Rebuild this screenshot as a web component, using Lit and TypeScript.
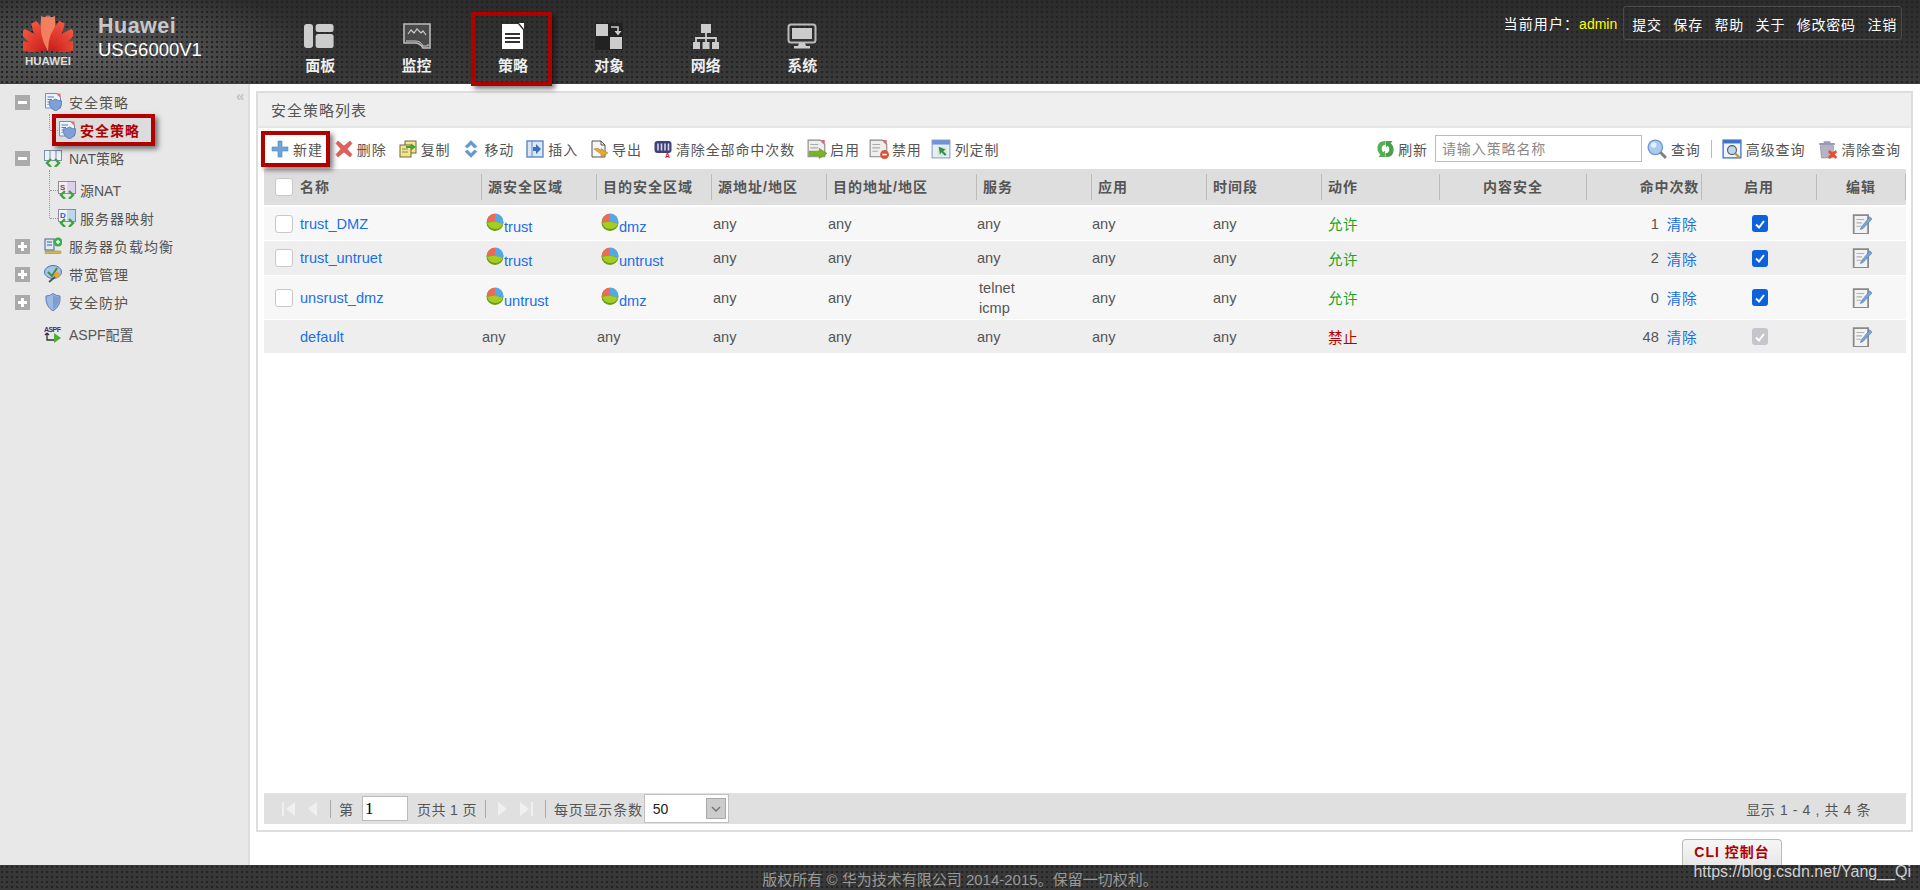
import { LitElement, html, css, svg } from 'lit';
import { customElement } from 'lit/decorators.js';

// ---- small icons, drawn roughly after the originals ----
const box = (inner: unknown, w = 18, h = 18) =>
  html`<svg class="ic" width=${w} height=${h} viewBox="0 0 18 18">${inner}</svg>`;

const shield = svg`<path d="M5 8 Q9 8 11.500 6 Q14 8 18 8 Q18.500 15 11.500 18 Q4.500 15 5 8Z" fill="#7f9fd6" stroke="#4a6ea8" stroke-width=".7"/>`;
const docBase = svg`<path d="M1.500 .5H13L16.500 4V15H1.500Z" fill="#eef2f9" stroke="#6f8fbf"/><path d="M12 .5L16.500 5V.5Z" fill="#e86a6a"/><path d="M3.500 4H10M3.500 6.500H8M3.500 9H4.500M3.500 11.500H4.500" stroke="#4f7fc2" stroke-width="1.200"/>`;
const natArrows = svg`<path d="M7 10L3 14L7 18M11 10L15 14L11 18" fill="none" stroke="#3fa33f" stroke-width="2.400"/>`;

const I = {
  policy: box(svg`${docBase}${shield}`),
  nat: box(svg`<rect x="0.500" y="1.500" width="17" height="10" fill="#eef2f8" stroke="#7b8ea8"/><path d="M6 1V11M12 1V11" stroke="#7b8ea8"/>${natArrows}`),
  snat: box(svg`<rect x="0.500" y="0.500" width="17" height="12" fill="#f4eef8" stroke="#8a8a9a"/><rect x="9" y="1" width="8" height="11" fill="#dcd0ea"/><text x="2" y="9" font-size="8" font-weight="bold" fill="#a83a2a" font-family="Liberation Sans">S</text>${natArrows}`),
  dnat: box(svg`<rect x="0.500" y="0.500" width="17" height="12" fill="#eef4fa" stroke="#8a8a9a"/><rect x="9" y="1" width="8" height="11" fill="#bcd6ee"/><text x="2" y="9" font-size="8" font-weight="bold" fill="#2a5ac8" font-family="Liberation Sans">D</text>${natArrows}`),
  lb: box(svg`<rect x="1" y="2" width="9" height="11" fill="#dfe8f4" stroke="#44628c"/><path d="M3 5H8M3 8H8" stroke="#44628c"/><circle cx="14" cy="5" r="4.500" fill="#3fae4a"/><path d="M12 5H16M14 3V7" stroke="#fff" stroke-width="1.400"/><rect x="1" y="14" width="16" height="2.500" rx="1" fill="#d8b84a" stroke="#8c7a2a" stroke-width=".5"/>`),
  qos: box(svg`<ellipse cx="9" cy="7" rx="8.500" ry="6.500" fill="#a6c4ea" stroke="#4a74ac"/><path d="M4 7L8 11L13 3" stroke="#3f8f3f" stroke-width="2" fill="none"/><circle cx="13" cy="10" r="3" fill="#e8a23a"/><path d="M11 12L5 17" stroke="#555" stroke-width="2"/>`),
  guard: box(svg`<path d="M2 3Q6 3 9 .5Q12 3 16 3Q17 13 9 18Q1 13 2 3Z" fill="#9db8e2" stroke="#5a7fb8"/><path d="M9 2Q12 4 15 4Q15.500 12 9 16.500Z" fill="#7d9ed2"/>`),
  aspf: box(svg`<text x="0" y="6.500" font-size="7" font-weight="bold" fill="#4a2a7a" font-family="Liberation Sans" textLength="18">ASPF</text><path d="M3 8V15H10M3 8L1 10M3 8L5 10" stroke="#333" stroke-width="1.300" fill="none"/><path d="M10 8L17 13L10 18Z" fill="#4fae2f"/>`),
  plus: box(svg`<path d="M7 1H11V7H17V11H11V17H7V11H1V7H7Z" fill="#6da5dc" stroke="#4f86bd" stroke-width=".6"/>`),
  del: box(svg`<path d="M3 1L9 6L15 1L17 3.500L12 9L17 14.500L15 17L9 12L3 17L1 14.500L6 9L1 3.500Z" fill="#e2605a" stroke="#b8403c" stroke-width=".5"/>`),
  copy: box(svg`<rect x="6" y="1" width="11" height="12" fill="#f4e58c" stroke="#6b6b3a"/><rect x="1" y="5" width="11" height="12" fill="#f4e58c" stroke="#6b6b3a"/><path d="M3 9H9M3 12H9" stroke="#8a8a4a"/><path d="M7 6H12V3.500L17 7L12 10.500V8H7Z" fill="#3fa33f"/>`),
  move: box(svg`<path d="M9 .5L15 6.500L12.500 8L9 4.500L5.500 8L3 6.500Z M9 17.500L15 11.500L12.500 10L9 13.500L5.500 10L3 11.500Z" fill="#5f9ad8" stroke="#4a7eb4" stroke-width=".4"/>`),
  insert: box(svg`<rect x="1" y="1" width="16" height="16" fill="#dbe6f6" stroke="#5f86c4" stroke-width="1.400"/><path d="M6 1V17" stroke="#5f86c4"/><path d="M7 7H10V4L15 9L10 14V11H7Z" fill="#3b6fb8"/>`),
  exportIc: box(svg`<path d="M2 1H11L15 5V17H2Z" fill="#f4f6fa" stroke="#555"/><path d="M11 1V5H15" fill="none" stroke="#555"/><path d="M4 9Q9 7 11 11V8.500L18 13L11 17V14Q8 12 4 9Z" fill="#e5a92c" stroke="#a8761a" stroke-width=".5"/>`),
  clearHits: box(svg`<rect x="0.500" y="1" width="17" height="12" rx="3" fill="#41417a"/><path d="M4 3.500V10.500M7.500 3.500V10.500M11 3.500V10.500M14.500 3.500V10.500" stroke="#d8d8ea" stroke-width="1.600"/><text x="11" y="18" font-size="7" font-weight="bold" fill="#d42020" font-family="Liberation Sans">A</text>`),
  enable: box(svg`<path d="M1 1H12L16 5V16H1Z" fill="#eee" stroke="#888"/><path d="M12 1L16 5V1Z" fill="#e86a6a"/><path d="M3 5H10M3 8H10" stroke="#aaa"/><path d="M2 11H11V8.500L18 13L11 17.500V15H2Z" fill="#7ab41e" stroke="#55841a" stroke-width=".5"/>`, 20, 20),
  disable: box(svg`<path d="M1 1H12L16 5V16H1Z" fill="#eee" stroke="#888"/><path d="M12 1L16 5V1Z" fill="#e86a6a"/><path d="M3 5H10M3 8H10M3 11H8" stroke="#aaa"/><circle cx="14" cy="14" r="4" fill="#e0522e"/><path d="M12 14H16" stroke="#fff" stroke-width="1.400"/>`, 20, 20),
  columns: box(svg`<rect x="1" y="1" width="16" height="16" fill="#e8eef6" stroke="#8aa0c0"/><rect x="1" y="1" width="16" height="4" fill="#6d94d8"/><path d="M6 7H14V15H6Z" fill="#d4e6d4"/><path d="M7 7L13 9.500L11 11L14 14L12.500 15L9.500 12L8 14Z" fill="#2f8f4f"/>`, 20, 20),
  refresh: box(svg`<path d="M9 .5Q1.500 0 .5 7Q0 12 3.500 15L1.500 17.500H8.500V10.500L6.500 12.500Q4.500 10 5 7.500Q5.500 5 9 4.500Z" fill="#55b055"/><path d="M9 17.500Q16.500 18 17.500 11Q18 6 14.500 3L16.500 .5H9.500V7.500L11.500 5.500Q13.500 8 13 10.500Q12.500 13 9 13.500Z" fill="#48a048"/>`, 17, 18),
  search: box(svg`<circle cx="7.500" cy="7.500" r="6.500" fill="#a8ccf0" stroke="#6f9ac8" stroke-width="1.200"/><circle cx="6" cy="5.500" r="2.500" fill="#e4f0fb"/><path d="M12 12L17 17" stroke="#808080" stroke-width="2.600"/>`, 20, 20),
  advSearch: box(svg`<rect x="1" y="1" width="16" height="16" fill="#eef4fb" stroke="#3f74c4" stroke-width="1.200"/><rect x="1" y="1" width="16" height="3" fill="#3f74c4"/><circle cx="9" cy="10" r="4" fill="#bcd6ee" stroke="#555"/><path d="M12 13L16 17" stroke="#c8962a" stroke-width="2"/>`, 20, 20),
  clearSearch: box(svg`<path d="M6 2H12V3.500H16V5.500H2V3.500H6Z" fill="#9a9ab0"/><path d="M3 6H15L14 17H4Z" fill="#b4b4c8" stroke="#8a8aa0" stroke-width=".6"/><path d="M11 10L14 12L17 10L18 12L16 14L18 16L17 18L14 16L11 18L10 16L12 14L10 12Z" fill="#e4502a"/>`, 20, 20),
  pie: box(svg`<circle cx="9" cy="9.500" r="8.500" fill="#6a9a1a"/><path d="M9 8.500V.5A8.200 8.200 0 0 1 17 10.500Z" fill="#55a8e8"/><path d="M9 8.500V.5A8.200 8.200 0 0 0 1 9.500Z" fill="#ec6a5a"/><path d="M9 8.500L17 10.800Q15 16 9 16Q3 16 1 9.800Z" fill="#a4cc22"/>`),
  edit: box(svg`<path d="M1.500 1H14.500V18H1.500Z" fill="#f2f2f2" stroke="#8a8a8a" stroke-width="1.600"/><path d="M4 5H11M4 8H9M4 11H8" stroke="#b0b0b0"/><path d="M16 2.500L18 4.500L10 13L7.500 14L8.500 11.500Z" fill="#74a6dc" stroke="#4a78b0" stroke-width=".5"/>`, 20, 20),
  check: html`<svg width="12" height="12" viewBox="0 0 12 12"><path d="M2 6.500L5 9.500L10 3" stroke="#fff" stroke-width="2" fill="none"/></svg>`,
};

// ---- top navigation icons ----
const navIcons = {
  panel: svg`<rect x="1" y="1" width="9" height="24" rx="3" fill="#ccc"/><rect x="13" y="1" width="20" height="8" rx="2.500" fill="#ccc" transform="scale(.9 1) translate(1 0)"/><rect x="13" y="11" width="20" height="14" rx="2.500" fill="#ccc" transform="scale(.9 1) translate(1 0)"/>`,
  monitor: svg`<g transform="translate(3 0)"><path d="M1 1H27V25H20Q17 20 12 20H1Z" fill="#4a4a4a" stroke="#bbb" stroke-width="1.600"/><path d="M5 11L8 7L11 10L14 6L18 10L20 8L23 12" fill="none" stroke="#ccc" stroke-width="1.200"/><path d="M3 18H12Q18 18 20 23H25V21" fill="none" stroke="#ccc" stroke-width="1"/></g>`,
  policy: svg`<g transform="translate(3 0)"><path d="M3 1H19L24 7V26H3Z" fill="#fff"/><path d="M20 0L25 6V0Z" fill="#fff"/><path d="M6 11H21M6 15H21M6 19H21" stroke="#333" stroke-width="2.200"/></g>`,
  object: svg`<g transform="translate(3 0)"><rect x="0" y="0" width="28" height="27" fill="#222"/><rect x="1" y="1" width="12" height="12" fill="#ccc"/><rect x="15" y="14" width="12" height="12" fill="#ccc"/><path d="M16 4H23V9" fill="none" stroke="#ccc" stroke-width="1.600"/><path d="M19.500 8H26.500L23 12.500Z" fill="#ccc"/></g>`,
  network: svg`<g transform="translate(3 0)"><rect x="9" y="1" width="10" height="9" fill="#ccc"/><path d="M14 10V15M4 21V15H24V21M14 15V21" stroke="#ccc" stroke-width="1.800" fill="none"/><rect x="1" y="19" width="7" height="7" fill="#ccc"/><rect x="10.500" y="19" width="7" height="7" fill="#ccc"/><rect x="20" y="19" width="7" height="7" fill="#ccc"/></g>`,
  system: svg`<g transform="translate(2 0)"><rect x="1.500" y="1.500" width="27" height="18" rx="2.500" fill="none" stroke="#bbb" stroke-width="2"/><rect x="5" y="5" width="20" height="11" fill="#ccc"/><path d="M12 20H18L19 23H11Z" fill="#ccc"/><rect x="7" y="23" width="16" height="2.500" fill="#ccc"/></g>`,
};

const petals = [-78, -52, -26, -6, 6, 26, 52, 78];

const navItems = [
  { label: '面板', icon: navIcons.panel },
  { label: '监控', icon: navIcons.monitor },
  { label: '策略', icon: navIcons.policy, marked: true },
  { label: '对象', icon: navIcons.object },
  { label: '网络', icon: navIcons.network },
  { label: '系统', icon: navIcons.system },
];

const toolsLeft = [
  { label: '新建', icon: I.plus, marked: true },
  { label: '删除', icon: I.del },
  { label: '复制', icon: I.copy },
  { label: '移动', icon: I.move },
  { label: '插入', icon: I.insert },
  { label: '导出', icon: I.exportIc },
  { label: '清除全部命中次数', icon: I.clearHits },
  { label: '启用', icon: I.enable, tight: true },
  { label: '禁用', icon: I.disable, tight: true },
  { label: '列定制', icon: I.columns },
];

const columns = [
  { label: '名称', cls: 'name' },
  { label: '源安全区域' },
  { label: '目的安全区域' },
  { label: '源地址/地区' },
  { label: '目的地址/地区' },
  { label: '服务' },
  { label: '应用' },
  { label: '时间段' },
  { label: '动作' },
  { label: '内容安全', cls: 'center' },
  { label: '命中次数', cls: 'right' },
  { label: '启用', cls: 'center' },
  { label: '编辑', cls: 'center' },
];

const rows = [
  { name: 'trust_DMZ', src: 'trust', dst: 'dmz', svc: ['any'], action: '允许', hits: 1, h: 33 },
  { name: 'trust_untruet', src: 'trust', dst: 'untrust', svc: ['any'], action: '允许', hits: 2, h: 34 },
  { name: 'unsrust_dmz', src: 'untrust', dst: 'dmz', svc: ['telnet', 'icmp'], action: '允许', hits: 0, h: 43 },
  { name: 'default', src: 'any', dst: 'any', svc: ['any'], action: '禁止', hits: 48, h: 33, builtin: true },
];

@customElement('app-root')
export class AppRoot extends LitElement {
  static styles = css`
    :host {
      display: flex;
      flex-direction: column;
      width: 1920px;
      height: 890px;
      overflow: hidden;
      background: #fff;
      color: #555;
      font: 14px "Liberation Sans", "Noto Sans CJK SC", sans-serif;
    }
    .ic { flex: none; display: block; }

    /* header */
    .top {
      position: relative;
      z-index: 2;
      flex: none;
      height: 84px;
      display: flex;
      border-bottom: 1px solid #4a3a3a;
      box-sizing: border-box;
      background:
        radial-gradient(circle at 2px 2px, #232323 1.1px, transparent 1.6px) 0 0 / 5px 5px,
        radial-gradient(ellipse 230px 70px at 90px 52px, #5c5c5c, transparent),
        linear-gradient(#2c2c2c, #3a3a3a);
    }
    .brand {
      width: 272px;
      flex: none;
      display: flex;
    }
    .logo {
      width: 50px;
      margin: 13px 0 0 23px;
      text-align: center;
      color: #ddd;
      font-size: 11.500px;
      font-weight: bold;
      line-height: 12px;
    }
    .logo svg { display: block; }
    .product { margin: 13px 0 0 25px; color: #fff; font-size: 18.500px; line-height: 22px; }
    .product b { display: block; color: #c8c8c8; font-size: 21.500px; letter-spacing: .5px; line-height: 26px; }
    .nav { display: flex; }
    .nav-item {
      position: relative;
      width: 96.400px;
      display: flex;
      flex-direction: column;
      align-items: center;
      padding-top: 23px;
      box-sizing: border-box;
      color: #eee;
      font-size: 15px;
      font-weight: bold;
    }
    .nav-item svg { display: block; height: 27px; margin-bottom: 4px; }
    .mark-nav {
      position: absolute;
      left: 6px;
      top: 12px;
      width: 81px;
      height: 74px;
      box-sizing: border-box;
      border: 4px solid #b00000;
      box-shadow: 3px 3px 5px rgba(0, 0, 0, .5);
    }
    .user {
      margin-left: auto;
      margin-right: 18px;
      display: flex;
      align-items: flex-start;
      padding-top: 6px;
      color: #fff;
    }
    .who { line-height: 36px; margin-right: 6px; letter-spacing: 1.100px; }
    .who i { font-style: normal; color: #ff0; letter-spacing: 0; }
    .links {
      display: flex;
      gap: 11.500px;
      height: 32px;
      line-height: 36px;
      padding: 0 4px 0 8px;
      border: 1px solid #4b4b4b;
      border-radius: 3px;
      letter-spacing: .8px;
    }

    /* body */
    .body { flex: 1; display: flex; min-height: 0; }
    .side {
      position: relative;
      flex: none;
      width: 250px;
      box-sizing: border-box;
      padding-top: 4px;
      background: #e8e8e8;
      border-right: 2px solid #dedede;
      letter-spacing: 1px;
      color: #555;
    }
    .collapse { position: absolute; left: 236px; top: 3px; color: #c4c4c4; font-size: 15px; font-weight: bold; }
    .node { height: 28px; display: flex; align-items: center; padding-left: 15px; }
    .node.last { margin-top: 4px; }
    .exp {
      flex: none;
      width: 15px;
      height: 15px;
      margin-right: 14px;
      background: #aaa;
      position: relative;
    }
    .exp.none { background: none; }
    .exp:not(.none)::before {
      content: "";
      position: absolute;
      left: 3px;
      right: 3px;
      top: 6px;
      height: 3px;
      background: #fff;
    }
    .exp.plus::after {
      content: "";
      position: absolute;
      top: 3px;
      bottom: 3px;
      left: 6px;
      width: 3px;
      background: #fff;
    }
    .node .ic { margin-right: 7px; }
    .nat { letter-spacing: 0; }
    .kids { position: relative; }
    .kids.nat-kids { padding-top: 4px; }
    .kids::before {
      content: "";
      position: absolute;
      left: 49px;
      top: -2px;
      bottom: 14px;
      border-left: 1px dotted #999;
    }
    .kid { position: relative; height: 28px; display: flex; align-items: center; padding-left: 58px; gap: 4px; }
    .kid::before {
      content: "";
      position: absolute;
      left: 50px;
      width: 8px;
      top: 14px;
      border-top: 1px dotted #999;
    }
    .kid.active { color: #b00000; font-weight: bold; background: linear-gradient(#dcdcdc, #dcdcdc) 53px 0 / 100px 100% no-repeat; }
    .kid.active::after {
      content: "";
      position: absolute;
      left: 52px;
      top: -2px;
      width: 103px;
      height: 32px;
      box-sizing: border-box;
      border: 4px solid #b00000;
      box-shadow: 3px 3px 5px rgba(0, 0, 0, .5);
    }

    .main { flex: 1; display: flex; flex-direction: column; min-width: 0; padding: 7px 7px 0 6px; }
    .panel {
      flex: none;
      height: 741px;
      box-sizing: border-box;
      border: 2px solid #ddd;
      display: flex;
      flex-direction: column;
    }
    .title {
      flex: none;
      height: 35px;
      line-height: 35px;
      padding-left: 13px;
      background: #efefef;
      border-bottom: 2px solid #e6e6e6;
      box-sizing: border-box;
      font-size: 15px;
      letter-spacing: 1px;
      color: #555;
    }
    .tools {
      flex: none;
      height: 41px;
      display: flex;
      align-items: center;
      padding: 0 10px 0 13px;
      letter-spacing: .9px;
    }
    .tool { position: relative; display: flex; align-items: center; gap: 4px; margin-right: 12px; white-space: nowrap; }
    .tool.tight { margin-right: 9px; gap: 3px; }
    .tool.marked::after {
      content: "";
      position: absolute;
      left: -10px;
      top: -8px;
      right: -7px;
      bottom: -8px;
      border: 4px solid #b00000;
      box-shadow: 3px 3px 5px rgba(0, 0, 0, .5);
    }
    .spacer { flex: 1; }
    .tools input {
      width: 207px;
      height: 27px;
      box-sizing: border-box;
      border: 1px solid #bbb;
      padding: 0 6px;
      margin: 0 5px 0 -5px;
      font: inherit;
      letter-spacing: .9px;
      outline: none;
    }
    .tools input::placeholder { color: #8a8a8a; }
    .vsep { width: 1px; height: 18px; background: #bbb; margin: 0 10px 0 -2px; }
    .tools .tool:last-child { margin-right: 0; }

    .grid { flex: none; margin: 0 5px 0 6px; }
    .row {
      display: grid;
      grid-template-columns: 218px 115px 115px 115px 150px 115px 115px 115px 118px 147px 115px 115px 89px;
      align-items: center;
      margin-bottom: 1px;
      font-size: 14.600px;
    }
    .row.head { height: 36px; background: #dedede; margin-bottom: 2px; font-weight: bold; font-size: 14px; letter-spacing: 1px; color: #555; }
    .row.odd { background: #f7f7f7; }
    .row.even { background: #eee; }
    .hcell {
      height: 26px;
      line-height: 26px;
      padding-left: 6px;
      border-right: 1px solid #bbb;
      box-sizing: border-box;
      white-space: nowrap;
    }
    .hcell.center { text-align: center; padding-left: 0; }
    .hcell.right { text-align: right; padding: 0 2px 0 0; letter-spacing: .8px; }
    .hcell.name { display: flex; align-items: center; gap: 7px; padding-left: 11px; }
    .cell { display: flex; align-items: center; white-space: nowrap; }
    .cell.name { padding-left: 11px; gap: 7px; }
    .cell.pad { padding-left: 6px; }
    .cell.addr { padding-left: 1px; }
    .cell.svc { display: block; padding-left: 0; line-height: 20px; }
    .cell.svc.multi { padding-left: 2px; }
    .cell.center { justify-content: center; }
    .cell.hits { justify-content: flex-end; gap: 8px; padding-right: 5px; }
    a { color: #1a6fe8; text-decoration: none; }
    .zone { display: flex; align-items: flex-start; padding-left: 4px; }
    .zone a { padding-top: 6px; line-height: 16px; }
    .tick {
      flex: none;
      width: 18px;
      height: 18px;
      box-sizing: border-box;
      background: #fff;
      border: 1px solid #c8c8c8;
      border-radius: 3px;
    }
    .tick.blank { background: none; border: none; }
    .on {
      width: 16px;
      height: 17px;
      border-radius: 3px;
      background: #0b62dc;
      display: flex;
      align-items: center;
      justify-content: center;
    }
    .on.off { background: #c6c6ca; }
    .allow { color: #1fa31f; letter-spacing: .5px; }
    .deny { color: #b00000; letter-spacing: .5px; }
    .link-cjk { letter-spacing: .5px; }

    .pager {
      flex: none;
      margin: auto 5px 6px 6px;
      height: 31px;
      background: #e0e0e0;
      display: flex;
      align-items: center;
      color: #555;
      white-space: nowrap;
    }
    .pbtn { display: block; margin-right: 11px; }
    .psep { width: 1px; height: 18px; background: #aaa; margin-right: 8px; }
    .pno {
      width: 46px;
      height: 25px;
      box-sizing: border-box;
      border: 1px solid #bbb;
      background: #fff;
      margin: 0 9px;
      color: #000;
      font: 17px/23px "Liberation Serif", serif;
      padding-left: 2px;
    }
    .pages { letter-spacing: .4px; }
    .per { letter-spacing: .8px; }
    .size {
      width: 85px;
      height: 29px;
      box-sizing: border-box;
      border: 1px solid #c0c0c0;
      background: #fff;
      margin-left: 1px;
      padding-left: 8px;
      display: flex;
      align-items: center;
      justify-content: space-between;
      color: #222;
    }
    .size span {
      width: 20px;
      height: 21px;
      margin-right: 2px;
      background: #ccc;
      border: 1px solid #aaa;
      box-sizing: border-box;
      display: flex;
      align-items: center;
      justify-content: center;
    }
    .range { margin-left: auto; margin-right: 35px; letter-spacing: .6px; }

    .tab-row { flex: 1; display: flex; justify-content: flex-end; align-items: flex-end; padding-right: 131px; }
    .cli {
      width: 100px;
      height: 26px;
      box-sizing: border-box;
      border: 1px solid #bbb;
      border-bottom: none;
      border-radius: 4px 4px 0 0;
      background: linear-gradient(#f6f6f6, #e8e8e8);
      color: #b00000;
      font-weight: bold;
      text-align: center;
      line-height: 24px;
      letter-spacing: 1px;
    }

    .foot {
      position: relative;
      flex: none;
      height: 25px;
      box-sizing: border-box;
      padding-top: 6px;
      text-align: center;
      color: #999;
      font-size: 15px;
      line-height: 18px;
      background:
        radial-gradient(circle at 2px 2px, #232323 1.1px, transparent 1.6px) 0 0 / 5px 5px,
        #383838;
    }
    .water {
      position: absolute;
      right: 9px;
      top: -3px;
      color: #d0d0d0;
      font-size: 16px;
      line-height: 20px;
    }
  `;

  renderZone(zone: string, builtin?: boolean) {
    if (builtin) return html`<div class="cell">${zone}</div>`;
    return html`<div class="cell zone">${I.pie}<a href="#">${zone}</a></div>`;
  }

  renderRow(r: (typeof rows)[number], i: number) {
    return html`
      <div class="row ${i % 2 ? 'even' : 'odd'}" style="height:${r.h}px">
        <div class="cell name">
          <span class="tick ${r.builtin ? 'blank' : ''}"></span>
          <a href="#">${r.name}</a>
        </div>
        ${this.renderZone(r.src, r.builtin)}
        ${this.renderZone(r.dst, r.builtin)}
        <div class="cell addr">any</div>
        <div class="cell addr">any</div>
        <div class="cell svc ${r.svc.length > 1 ? 'multi' : ''}">${r.svc.map(s => html`<div>${s}</div>`)}</div>
        <div class="cell">any</div>
        <div class="cell pad">any</div>
        <div class="cell pad"><span class=${r.builtin ? 'deny' : 'allow'}>${r.action}</span></div>
        <div class="cell"></div>
        <div class="cell hits">${r.hits}<a class="link-cjk" href="#">清除</a></div>
        <div class="cell center"><span class="on ${r.builtin ? 'off' : ''}">${I.check}</span></div>
        <div class="cell center">${I.edit}</div>
      </div>
    `;
  }

  render() {
    return html`
      <div class="top">
        <div class="brand">
          <div class="logo">
            <svg width="50" height="42" viewBox="0 0 50 42">
              <defs>
                <linearGradient id="petal" x1="0" y1="0" x2="0" y2="1">
                  <stop offset="0" stop-color="#f2553f" />
                  <stop offset="1" stop-color="#c81a18" />
                </linearGradient>
              </defs>
              ${petals.map(
                a => svg`<path d="M25 38 Q17 22 22 ${Math.abs(a) < 10 ? 2 : 6} Q25 6 28 ${Math.abs(a) < 10 ? 2 : 6} Q33 22 25 38Z" fill=${Math.abs(a) < 10 ? '#f08060' : 'url(#petal)'} transform="rotate(${a} 25 38) ${Math.abs(a) > 60 ? 'scale(1 .92)' : ''}" />`,
              )}
            </svg>
            HUAWEI
          </div>
          <div class="product"><b>Huawei</b>USG6000V1</div>
        </div>
        <div class="nav">
          ${navItems.map(
            n => html`<div class="nav-item">
              <svg width="34" height="27" viewBox="0 0 34 27">${n.icon}</svg>
              ${n.label}
              ${n.marked ? html`<div class="mark-nav"></div>` : ''}
            </div>`,
          )}
        </div>
        <div class="user">
          <div class="who">当前用户：<i>admin</i></div>
          <div class="links">
            <span>提交</span><span>保存</span><span>帮助</span><span>关于</span><span>修改密码</span><span>注销</span>
          </div>
        </div>
      </div>

      <div class="body">
        <div class="side">
          <div class="collapse">«</div>
          <div class="node"><span class="exp"></span>${I.policy}安全策略</div>
          <div class="kids">
            <div class="kid active">${I.policy}安全策略</div>
          </div>
          <div class="node"><span class="exp"></span>${I.nat}<span class="nat">NAT策略</span></div>
          <div class="kids nat-kids">
            <div class="kid">${I.snat}<span class="nat">源NAT</span></div>
            <div class="kid">${I.dnat}服务器映射</div>
          </div>
          <div class="node"><span class="exp plus"></span>${I.lb}服务器负载均衡</div>
          <div class="node"><span class="exp plus"></span>${I.qos}带宽管理</div>
          <div class="node"><span class="exp plus"></span>${I.guard}安全防护</div>
          <div class="node last"><span class="exp none"></span>${I.aspf}<span class="nat">ASPF配置</span></div>
        </div>

        <div class="main">
          <div class="panel">
            <div class="title">安全策略列表</div>
            <div class="tools">
              ${toolsLeft.map(
                t => html`<div class="tool ${t.marked ? 'marked' : ''} ${t.tight ? 'tight' : ''}">${t.icon}${t.label}</div>`,
              )}
              <div class="spacer"></div>
              <div class="tool">${I.refresh}刷新</div>
              <input placeholder="请输入策略名称" />
              <div class="tool">${I.search}查询</div>
              <div class="vsep"></div>
              <div class="tool">${I.advSearch}高级查询</div>
              <div class="tool">${I.clearSearch}清除查询</div>
            </div>

            <div class="grid">
              <div class="row head">
                ${columns.map(c =>
                  c.cls === 'name'
                    ? html`<div class="hcell name"><span class="tick"></span>${c.label}</div>`
                    : html`<div class="hcell ${c.cls ?? ''}">${c.label}</div>`,
                )}
              </div>
              ${rows.map((r, i) => this.renderRow(r, i))}
            </div>

            <div class="pager">
              <svg class="pbtn" style="margin-left:17px" width="15" height="16" viewBox="0 0 15 16"><path d="M1 1H3V15H1ZM14 1V15L5 8Z" fill="#f0f0f0" /></svg>
              <svg class="pbtn" style="margin-right:13px" width="10" height="16" viewBox="0 0 10 16"><path d="M10 1V15L1 8Z" fill="#f0f0f0" /></svg>
              <div class="psep"></div>
              第
              <div class="pno">1</div>
              <span class="pages">页共 1 页</span>
              <div class="psep" style="margin-left:8px;margin-right:11px"></div>
              <svg class="pbtn" width="11" height="16" viewBox="0 0 11 16"><path d="M1 1V15L10 8Z" fill="#f0f0f0" /></svg>
              <svg class="pbtn" width="15" height="16" viewBox="0 0 15 16"><path d="M1 1V15L10 8ZM12 1H14V15H12Z" fill="#f0f0f0" /></svg>
              <div class="psep"></div>
              <span class="per">每页显示条数</span>
              <div class="size">
                50
                <span><svg width="10" height="6" viewBox="0 0 10 6"><path d="M1 1L5 5L9 1" fill="none" stroke="#777" stroke-width="1.500" /></svg></span>
              </div>
              <div class="range">显示 1 - 4 , 共 4 条</div>
            </div>
          </div>
          <div class="tab-row"><div class="cli">CLI 控制台</div></div>
        </div>
      </div>

      <div class="foot">
        版权所有 © 华为技术有限公司 2014-2015。保留一切权利。
        <div class="water">https://blog.csdn.net/Yang__Qi</div>
      </div>
    `;
  }
}
